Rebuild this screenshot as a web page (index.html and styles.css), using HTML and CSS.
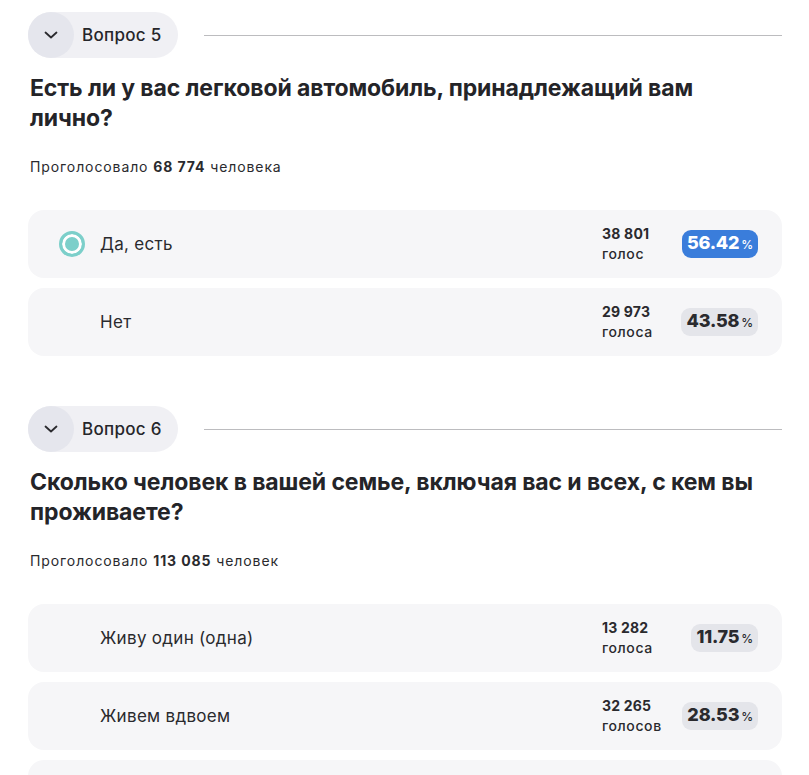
FILE: index.html
```html
<!doctype html>
<html>
<head>
    <meta charset="utf-8">
    <title>Опрос</title>
    <link rel="stylesheet" href="styles.css">
</head>
<body>
	<div class="poll">
		<div class="question">
			<div class="q-head">
				<div class="q-tag">
					<span class="q-toggle">
						<svg width="14" height="8" viewBox="0 0 14 8"><path d="M1.5 1.5 L7 6.5 L12.5 1.5" fill="none" stroke="#2a2a2e" stroke-width="1.8" stroke-linecap="round" stroke-linejoin="round"/></svg>
					</span>
					<span class="q-num">Вопрос 5</span>
				</div>
				<span class="q-line"></span>
			</div>
			<h2 class="q-title">Есть ли у вас легковой автомобиль, принадлежащий вам лично?</h2>
			<p class="q-total">Проголосовало <b>68 774</b> человека</p>
			<ul class="answers">
				<li class="answer">
					<span class="radio checked"></span>
					<span class="label">Да, есть</span>
					<span class="votes"><b>38 801</b>голос</span>
					<span class="pct-box"><span class="pct blue">56.42<small>%</small></span></span>
				</li>
				<li class="answer">
					<span class="radio"></span>
					<span class="label">Нет</span>
					<span class="votes"><b>29 973</b>голоса</span>
					<span class="pct-box"><span class="pct">43.58<small>%</small></span></span>
				</li>
			</ul>
		</div>

		<div class="question">
			<div class="q-head">
				<div class="q-tag">
					<span class="q-toggle">
						<svg width="14" height="8" viewBox="0 0 14 8"><path d="M1.5 1.5 L7 6.5 L12.5 1.5" fill="none" stroke="#2a2a2e" stroke-width="1.8" stroke-linecap="round" stroke-linejoin="round"/></svg>
					</span>
					<span class="q-num">Вопрос 6</span>
				</div>
				<span class="q-line"></span>
			</div>
			<h2 class="q-title">Сколько человек в вашей семье, включая вас и всех, с кем вы проживаете?</h2>
			<p class="q-total">Проголосовало <b>113 085</b> человек</p>
			<ul class="answers">
				<li class="answer">
					<span class="radio"></span>
					<span class="label">Живу один (одна)</span>
					<span class="votes"><b>13 282</b>голоса</span>
					<span class="pct-box"><span class="pct">11.75<small>%</small></span></span>
				</li>
				<li class="answer">
					<span class="radio"></span>
					<span class="label">Живем вдвоем</span>
					<span class="votes"><b>32 265</b>голосов</span>
					<span class="pct-box"><span class="pct">28.53<small>%</small></span></span>
				</li>
				<li class="answer">
					<span class="radio"></span>
					<span class="label">Живем втроем</span>
					<span class="votes"><b>30 118</b>голосов</span>
					<span class="pct-box"><span class="pct">26.63<small>%</small></span></span>
				</li>
			</ul>
		</div>
	</div>
</body>
</html>
```

FILE: styles.css
```css
*{margin: 0;padding: 0;list-style: none;box-sizing: border-box;}
body{background: #fff;color: #222226;font-family: Inter, "Noto Sans", sans-serif;}
.poll{padding: 12px 27px 0 28px;}
.question{margin-bottom: 50px;}

.q-head{display: flex;align-items: center;gap: 26px;}
.q-tag{display: flex;align-items: center;height: 46px;background: #f0f0f4;border-radius: 23px;padding-right: 16px;}
.q-toggle{width: 46px;height: 46px;border-radius: 50%;background: #e5e6ed;display: flex;align-items: center;justify-content: center;}
.q-num{font-size: 17px;font-weight: 500;margin-left: 8px;color: #26262a;letter-spacing: 0.3px;}
.q-line{flex: 1;height: 1px;background: #bcbcbf;}

.q-title{max-width: 732px;font-size: 23px;line-height: 30px;font-weight: 700;margin-top: 15px;padding-left: 2px;color: #242428;letter-spacing: -0.1px;}
.q-total{font-size: 14px;margin-top: 25px;padding-left: 2px;color: #2a2a2e;letter-spacing: 0.9px;}
.q-total b{font-weight: 700;}

.answers{margin-top: 35px;display: flex;flex-direction: column;gap: 10px;}
.answer{display: flex;align-items: center;height: 68px;background: #f6f6f8;border-radius: 16px;padding: 0 24px 0 31px;}
.radio{width: 26px;height: 26px;border-radius: 50%;flex: none;}
.radio.checked{border: 3px solid #7ccfca;background: #7ccfca;box-shadow: inset 0 0 0 3px #fff;}
.label{flex: 1;margin-left: 15px;font-size: 17px;color: #2a2a2e;letter-spacing: 0.3px;}
.votes{width: 83px;font-size: 14px;line-height: 20px;font-weight: 500;color: #2a2a2e;letter-spacing: 0.6px;}
.votes b{display: block;font-weight: 700;letter-spacing: 0.2px;}
.pct-box{width: 73px;display: flex;justify-content: flex-end;}
.pct{background: #e4e5ea;border-radius: 9px;padding: 3px 5px;font-size: 18px;line-height: 20px;font-weight: 800;color: #2a2a2e;white-space: nowrap;letter-spacing: -0.2px;}
.pct small{font-size: 12px;font-weight: 500;margin-left: 2px;}
.pct.blue{background: #3a7ddb;color: #fff;}
```
